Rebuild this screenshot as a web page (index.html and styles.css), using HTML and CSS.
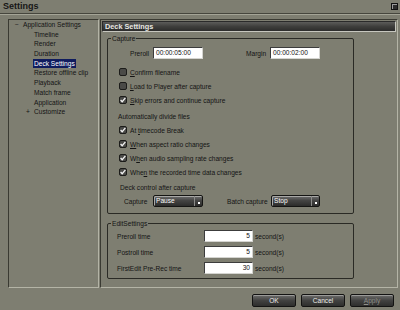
FILE: index.html
```html
<!DOCTYPE html>
<html>
<head>
<meta charset="utf-8">
<title>Settings</title>
<link rel="stylesheet" href="styles.css">
</head>
<body>
<div class="titlebar">
  <span class="title">Settings</span>
  <span class="close"></span>
</div>
<div class="main">
  <div class="tree">
    <div class="node root"><span class="exp">−</span>Application Settings</div>
    <div class="node child">Timeline</div>
    <div class="node child">Render</div>
    <div class="node child">Duration</div>
    <div class="node child"><span class="sel">Deck Settings</span></div>
    <div class="node child">Restore offline clip</div>
    <div class="node child">Playback</div>
    <div class="node child">Match frame</div>
    <div class="node child">Application</div>
    <div class="node root2"><span class="exp">+</span>Customize</div>
  </div>
  <div class="panel">
    <div class="header">Deck Settings</div>
    <fieldset class="group capture">
      <legend>Capture</legend>
      <div class="timerow">
        <span class="l-pre">Preroll</span>
        <span class="field tc">00:00:05:00</span>
        <span class="l-margin">Margin</span>
        <span class="field tc">00:00:02:00</span>
      </div>
      <div class="check first">
        <svg class="cb" viewBox="0 0 8 8"><rect x=".5" y=".5" width="7" height="7" rx="1.5" fill="#4a4a47" stroke="#1c1c1a"/></svg>
        <span><u>C</u>onfirm filename</span>
      </div>
      <div class="check">
        <svg class="cb" viewBox="0 0 8 8"><rect x=".5" y=".5" width="7" height="7" rx="1.5" fill="#4a4a47" stroke="#1c1c1a"/></svg>
        <span><u>L</u>oad to Player after capture</span>
      </div>
      <div class="check">
        <svg class="cb" viewBox="0 0 8 8"><rect x=".5" y=".5" width="7" height="7" rx="1.5" fill="#4a4a47" stroke="#1c1c1a"/><path d="M1.6 4 L3.2 5.7 L6.4 1.9" fill="none" stroke="#f4f4f4" stroke-width="1.3"/></svg>
        <span><u>S</u>kip errors and continue capture</span>
      </div>
      <div class="note">Automatically divide files</div>
      <div class="check">
        <svg class="cb" viewBox="0 0 8 8"><rect x=".5" y=".5" width="7" height="7" rx="1.5" fill="#4a4a47" stroke="#1c1c1a"/><path d="M1.6 4 L3.2 5.7 L6.4 1.9" fill="none" stroke="#f4f4f4" stroke-width="1.3"/></svg>
        <span>At <u>t</u>imecode Break</span>
      </div>
      <div class="check">
        <svg class="cb" viewBox="0 0 8 8"><rect x=".5" y=".5" width="7" height="7" rx="1.5" fill="#4a4a47" stroke="#1c1c1a"/><path d="M1.6 4 L3.2 5.7 L6.4 1.9" fill="none" stroke="#f4f4f4" stroke-width="1.3"/></svg>
        <span><u>W</u>hen aspect ratio changes</span>
      </div>
      <div class="check">
        <svg class="cb" viewBox="0 0 8 8"><rect x=".5" y=".5" width="7" height="7" rx="1.5" fill="#4a4a47" stroke="#1c1c1a"/><path d="M1.6 4 L3.2 5.7 L6.4 1.9" fill="none" stroke="#f4f4f4" stroke-width="1.3"/></svg>
        <span>W<u>h</u>en audio sampling rate changes</span>
      </div>
      <div class="check">
        <svg class="cb" viewBox="0 0 8 8"><rect x=".5" y=".5" width="7" height="7" rx="1.5" fill="#4a4a47" stroke="#1c1c1a"/><path d="M1.6 4 L3.2 5.7 L6.4 1.9" fill="none" stroke="#f4f4f4" stroke-width="1.3"/></svg>
        <span>Whe<u>n</u> the recorded time data changes</span>
      </div>
      <div class="deck">Deck control after capture</div>
      <div class="selrow">
        <span class="l-cap">Capture</span>
        <span class="select s1"><span class="val">Pause</span><span class="arr"></span></span>
        <span class="l-batch">Batch capture</span>
        <span class="select s2"><span class="val">Stop</span><span class="arr"></span></span>
      </div>
    </fieldset>
    <fieldset class="group edit">
      <legend>EditSettings</legend>
      <div class="erow">
        <span class="l-edit">Preroll time</span>
        <span class="field num">5</span>
        <span class="unit">second(s)</span>
      </div>
      <div class="erow">
        <span class="l-edit">Postroll time</span>
        <span class="field num">5</span>
        <span class="unit">second(s)</span>
      </div>
      <div class="erow">
        <span class="l-edit">FirstEdit Pre-Rec time</span>
        <span class="field num">30</span>
        <span class="unit">second(s)</span>
      </div>
    </fieldset>
  </div>
</div>
<div class="footer">
  <span class="btn">OK</span>
  <span class="btn">Cancel</span>
  <span class="btn dis"><u>A</u>pply</span>
</div>
</body>
</html>
```
FILE: styles.css
```css
html, body {
  margin: 0;
  padding: 0;
}
body {
  width: 400px;
  height: 310px;
  overflow: hidden;
  background: #7e7e71;
  font-family: "Liberation Sans", Arial, sans-serif;
  font-size: 6.6px;
  color: #141414;
}

/* title bar */
.titlebar {
  height: 13px;
  display: flex;
  justify-content: space-between;
  align-items: flex-start;
  padding: 0 2px 0 3px;
  border-bottom: 1px solid #46463d;
  box-shadow: 0 1px 0 #a4a496;
}
.title {
  font-size: 9px;
  font-weight: bold;
  line-height: 12px;
  color: #161616;
}
.close {
  width: 5px;
  height: 5px;
  margin-top: 3px;
  border: 1px solid #111;
  background: #2c2c2c;
  box-shadow: inset 1px 1px 0 #9a9a9a;
}

/* main area */
.main {
  display: flex;
  gap: 1px;
  height: 269px;
  padding: 5px 2px 0 8px;
}
.tree {
  width: 91px;
  box-sizing: border-box;
  border: 1px solid;
  border-color: #3a3a32 #b4b4a6 #b4b4a6 #3a3a32;
}
.node {
  line-height: 9.7px;
  height: 9.7px;
  white-space: nowrap;
}
.node.root { padding-left: 6px; }
.node.root2 { padding-left: 17px; }
.node.child { padding-left: 25px; }
.exp {
  display: inline-block;
  width: 8px;
}
.sel {
  display: inline-block;
  margin-left: -1px;
  padding: 0 1px;
  line-height: 9px;
  background: #0f1c5e;
  color: #fff;
}

.panel {
  width: 298px;
  box-sizing: border-box;
  border: 1px solid;
  border-color: #3a3a32 #b4b4a6 #b4b4a6 #3a3a32;
  padding: 1px;
}
.header {
  height: 11px;
  box-sizing: border-box;
  border: 1px solid;
  border-color: #2a2a2a #c6c6be #c6c6be #2a2a2a;
  background: linear-gradient(#5c5c5a, #3e3e3c 50%, #2c2c2b);
  color: #e8e8e4;
  font-weight: bold;
  font-size: 7.3px;
  line-height: 9px;
  padding-left: 2px;
}

/* group boxes */
.group {
  margin: 2px 0 0 5px;
  width: 247px;
  box-sizing: border-box;
  padding: 0 0 6px 0;
  border: 1px solid #2a2a25;
  border-radius: 2px;
  min-width: 0;
}
.group legend {
  padding: 0 1px;
  margin-left: 3px;
  line-height: 9px;
}
.group.edit {
  margin-top: 5px;
  padding-bottom: 4px;
}

.field {
  box-sizing: border-box;
  height: 12px;
  background: #fff;
  border: 1px solid;
  border-color: #3c3c3c #d4d4d0 #d4d4d0 #3c3c3c;
  line-height: 10px;
  padding: 0 2px;
  color: #111;
}

.timerow {
  display: flex;
  align-items: center;
  height: 12px;
  margin-top: 4px;
  padding-left: 22px;
}
.l-pre { width: 23px; }
.tc { width: 50px; }
.l-margin { margin-left: 43px; width: 24px; }

.check {
  display: flex;
  align-items: center;
  gap: 3px;
  height: 14px;
  padding-left: 11px;
}
.check.first { margin-top: 6px; }
.cb {
  width: 8px;
  height: 8px;
  flex: none;
}
.note {
  height: 13px;
  line-height: 13px;
  margin-top: 3px;
  padding-left: 10px;
}
.deck {
  height: 12px;
  line-height: 12px;
  margin-top: 3px;
  padding-left: 12px;
}

.selrow {
  display: flex;
  align-items: center;
  height: 12px;
  margin-top: 1px;
  padding-left: 16px;
}
.l-cap { width: 29px; }
.l-batch { margin-left: 24px; width: 44px; }
.select {
  display: flex;
  box-sizing: border-box;
  height: 12px;
  border: 1px solid #141412;
  border-radius: 2px;
  background: linear-gradient(#707070, #444443 45%, #2c2c2b);
  box-shadow: inset 1px 1px 0 #a8a8a6;
  color: #fafafa;
}
.select.s1 { width: 50px; }
.select.s2 { width: 49px; }
.select .val {
  flex: 1;
  padding-left: 2px;
  line-height: 10px;
}
.select .arr {
  width: 7px;
  border-left: 1px solid #8a8a88;
}
.select .arr::after {
  content: "";
  display: block;
  width: 2px;
  height: 2px;
  margin: 6px auto 0;
  background: #fff;
}

.erow {
  display: flex;
  align-items: center;
  height: 12px;
  margin-top: 4px;
  padding-left: 9px;
}
.edit legend + .erow { margin-top: 2px; }
.l-edit { width: 87px; }
.num {
  width: 49px;
  text-align: right;
}
.unit { margin-left: 2px; }

/* footer */
.footer {
  display: flex;
  justify-content: flex-end;
  gap: 5px;
  padding: 6px 6px 0 0;
}
.btn {
  width: 44px;
  height: 13px;
  box-sizing: border-box;
  border: 1px solid #131312;
  border-radius: 2px;
  background: linear-gradient(#6e6e6c, #424241 50%, #2e2e2d);
  box-shadow: inset 0 1px 0 #9a9a98;
  color: #ececea;
  text-align: center;
  line-height: 11px;
}
.btn.dis { color: #8e8e8a; }
```
